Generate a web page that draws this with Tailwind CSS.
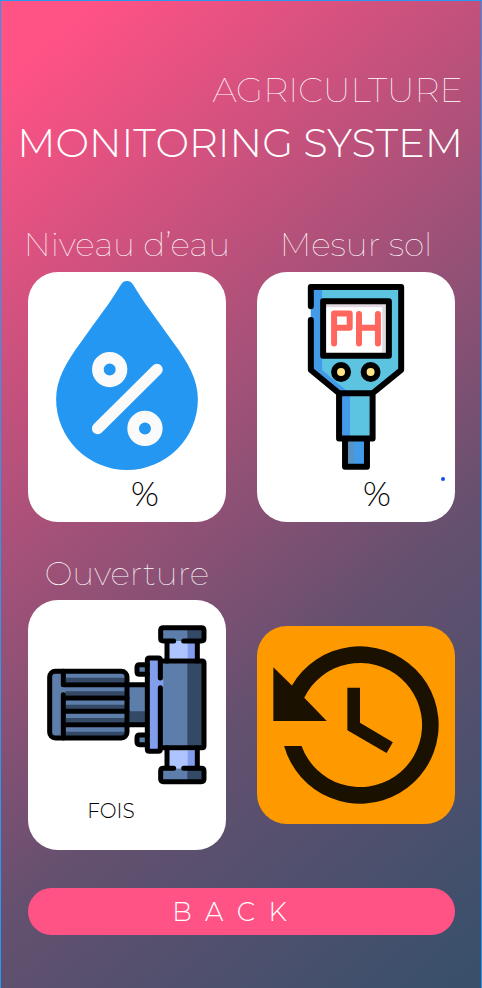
<!DOCTYPE html>
<html lang="fr">
<head>
<meta charset="utf-8">
<meta name="viewport" content="width=device-width, initial-scale=1">
<title>Agriculture Monitoring System</title>
<script src="https://cdn.jsdelivr.net/npm/@tailwindcss/browser@4"></script>
</head>
<body class="font-['Montserrat','Inter',sans-serif]">
<main class="flex min-h-screen flex-col border-x border-t border-[#2a98f2] bg-[linear-gradient(139deg,#ff5285_6%,#64506f_66%,#39506b_98%)] pr-[26px] pb-[52px] pl-[27px] text-white">
  <h1 class="-mx-2 flex flex-col items-end pt-16 whitespace-nowrap">
    <span class="text-[35px] leading-[50px] font-thin">AGRICULTURE</span>
    <span class="text-[40px] leading-[56px] font-light">MONITORING SYSTEM</span>
  </h1>

  <div class="mt-[49px] grid grid-cols-2 gap-x-[31px]">
    <section class="flex flex-col">
      <h2 class="-mx-4 pb-1 text-center text-[33px] leading-[48px] font-thin whitespace-nowrap">Niveau d’eau</h2>
      <div class="flex h-[250px] flex-col items-center rounded-[30px] bg-white pt-[9px] text-black">
        <svg class="h-[189px] w-[142px]" viewBox="108 47 426 568" aria-hidden="true">
          <path fill="#2497f3" d="M321 47C330 47 336 52 340 59C368 107 411 163 459 230C505 292 534 343 534 402A213 213 0 0 1 108 402C108 343 137 292 183 230C231 163 274 107 302 59C306 52 312 47 321 47Z"/>
          <g fill="none" stroke="#fafafa" stroke-width="35" stroke-linecap="round"><circle cx="269" cy="313" r="35.500"/><circle cx="375" cy="490" r="35.500"/><path d="M233 490L411 313"/></g>
        </svg>
        <p class="pl-9 text-[34px] leading-[48px] font-light">%</p>
      </div>
    </section>

    <section class="flex flex-col">
      <h2 class="-mx-4 pb-1 text-center text-[33px] leading-[48px] font-thin whitespace-nowrap">Mesur sol</h2>
      <div class="relative flex h-[250px] flex-col items-center rounded-[30px] bg-white pt-3 text-black">
        <svg class="h-[186px] w-[98px]" viewBox="53 41 290 560" aria-hidden="true">
          <path fill="#5cc3e0" d="M62 50H334V300L248 370V506H147V370L62 300Z"/>
          <path fill="#439be8" d="M62 50H96V300L168 361H180V506H147V370L62 300Z"/>
          <path fill="#439be8" d="M165 506H231V591H165Z"/><path fill="#5a92c4" d="M165 506H191V591H165Z"/>
          <path fill="#fff" d="M99 93H297V257H99Z"/><path fill="#e0d9e1" d="M99 101H288V111H99ZM277 101H288V248H277Z"/>
          <g fill="none" stroke="#000" stroke-width="18" stroke-linecap="round" stroke-linejoin="round">
            <path d="M62 108V50H334V300L248 370H147L62 300V149M99 93H297V257H99ZM147 370V506H248V370M165 506V591H231V506"/>
          </g>
          <g fill="#ffe58a" stroke="#000" stroke-width="18"><circle cx="153" cy="306" r="21"/><circle cx="242" cy="306" r="21"/></g>
          <path fill="none" stroke="#ff665d" stroke-width="18" stroke-linecap="round" stroke-linejoin="round" d="M132 220V130H179V173H132M207 131V220M264 131V220M207 173H264"/>
        </svg>
        <p class="pl-[42px] text-[34px] leading-[48px] font-light">%</p>
        <span class="absolute right-[10px] bottom-[41px] size-1 rounded-full bg-[#0b4df0]"></span>
      </div>
    </section>

    <section class="mt-[26px] flex flex-col">
      <h2 class="-mx-4 pb-[2px] text-center text-[33px] leading-[50px] font-thin whitespace-nowrap">Ouverture</h2>
      <div class="flex h-[250px] flex-col items-center rounded-[30px] bg-white pt-[25px] text-black">
        <svg class="size-[160px]" viewBox="80 104 480 480" aria-hidden="true">
          <path fill="#5d7dab" d="M88 243H320V443H88ZM320 283H381V403H320ZM350 223H381V252H350ZM350 434H381V463H350ZM421 212H551V472H421ZM421 112H551V152H421ZM421 534H551V574H421Z"/>
          <path fill="#344966" d="M136 262H320V275H136ZM136 303H320V316H136ZM136 343H320V356H136ZM136 383H320V396H136ZM136 424H320V437H136ZM327 363H375V400H327ZM501 112H551V152H501ZM501 212H551V472H501ZM501 534H551V574H501Z"/>
          <path fill="#adc4ff" d="M440 152H501V205H440ZM440 480H501V534H440Z"/>
          <path fill="#819dec" d="M501 152H531V205H501ZM501 480H531V534H501ZM381 203H420V483H381ZM420 265H429V290H420Z"/>
          <g fill="none" stroke="#000" stroke-width="15" stroke-linecap="round" stroke-linejoin="round">
            <rect x="88" y="243" width="232" height="200" rx="17"/>
            <path d="M129 243V283H375M129 443V313M129 323H320M129 363H320M129 403H375"/>
            <path d="M381 223H358Q350 223 350 231V244Q350 252 358 252H381M381 434H358Q350 434 350 442V455Q350 463 358 463H381"/>
            <path d="M420 263V209Q420 203 414 203H387Q381 203 381 209V477Q381 483 387 483H414Q420 483 420 477V292"/>
            <path d="M420 212H545Q551 212 551 218V466Q551 472 545 472H420"/>
            <path d="M460 152H429Q421 152 421 144V120Q421 112 429 112H543Q551 112 551 120V144Q551 152 543 152H490M440 152V212M531 152V212"/>
            <path d="M460 534H429Q421 534 421 542V566Q421 574 429 574H543Q551 574 551 566V542Q551 534 543 534H490M440 534V472M531 534V472"/>
          </g>
        </svg>
        <p class="pt-3 pr-8 text-[20px] leading-[28px] font-light">FOIS</p>
      </div>
    </section>

    <button type="button" aria-label="Historique" class="mt-[104px] flex aspect-square w-full items-start self-start rounded-[30px] bg-[#ff9900] pt-5 pl-4">
      <svg class="h-[158px] w-[166px]" viewBox="68 92 500 476" aria-hidden="true">
        <path fill="#1a1100" d="M125 211A237 237 0 1 1 101.500 393H154A187 187 0 1 0 162 248L230 318H69V156ZM292 218H330V323L429 382L410 414L292 346Z"/>
      </svg>
    </button>
  </div>

  <button type="button" class="mt-[38px] h-[47px] w-full rounded-full bg-[#ff5285] pr-6 text-center text-[26px] leading-[48px] font-light whitespace-pre">B  A  C  K</button>
</main>
</body>
</html>
